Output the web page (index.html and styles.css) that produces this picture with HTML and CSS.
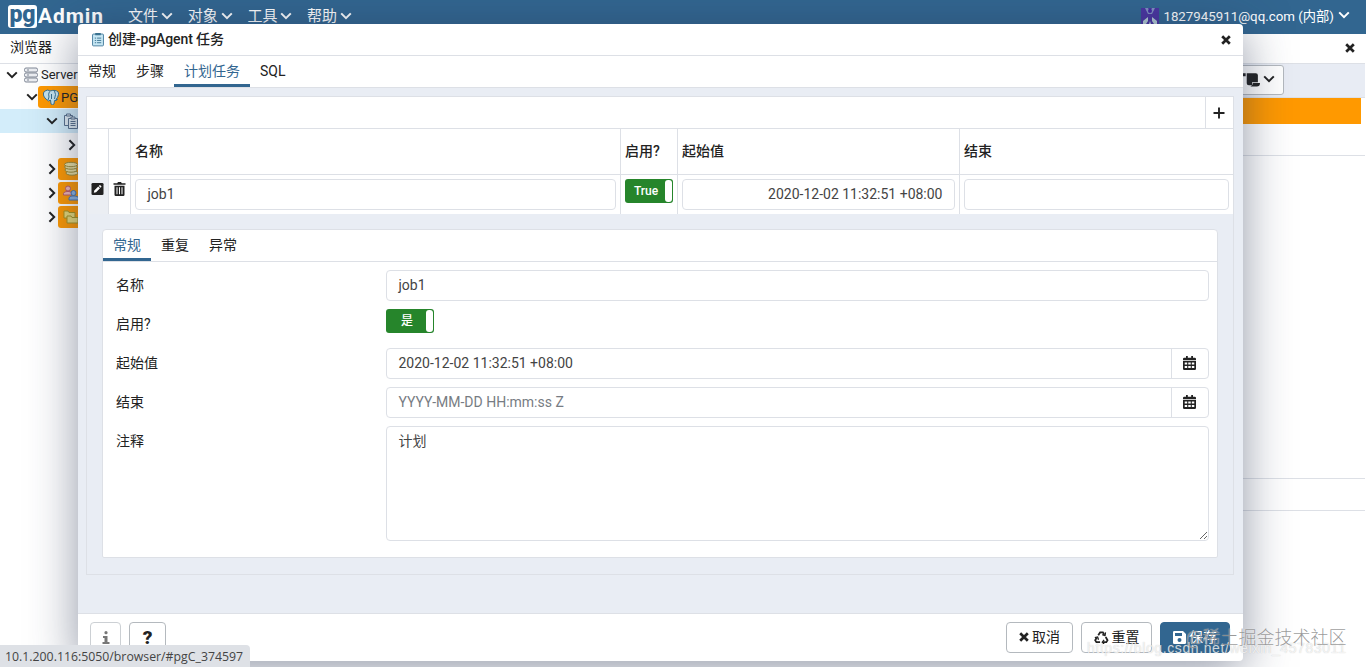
FILE: index.html
```
<!DOCTYPE html>
<html lang="zh-CN">
<head>
    <meta charset="UTF-8">
    <meta name="viewport" content="width=device-width, initial-scale=1.0">
    <title>pgAdmin 4</title>
    <link rel="stylesheet" href="styles.css">
</head>
<body>
    <svg class="symbols">
        <symbol id="down" viewBox="0 0 12 8"><path d="M1.2 1.4 6 6.2l4.800-4.800" fill="none" stroke="currentColor" stroke-width="2"/></symbol>
        <symbol id="right" viewBox="0 0 8 12"><path d="M1.400 1.200 6.200 6l-4.800 4.800" fill="none" stroke="currentColor" stroke-width="2"/></symbol>
        <symbol id="close" viewBox="0 0 10 10"><path d="M1.200 1.200l7.600 7.600M8.800 1.200L1.200 8.800" stroke="currentColor" stroke-width="2.700"/></symbol>
        <symbol id="calendar" viewBox="0 0 13 14">
            <path fill-rule="evenodd" fill="currentColor" d="M3 0h1.800v1.800h3.400V0H10v1.800h1.800Q13 1.800 13 3v1.200H0V3q0-1.200 1.200-1.200H3zM0 5h13v7.800q0 1.200-1.200 1.200H1.200Q0 14 0 12.800zM1.700 6.500v1.900h2.500V6.500zm3.550 0v1.900h2.500V6.500zm3.550 0v1.900h2.500V6.500zM1.700 10v1.900h2.500V10zm3.550 0v1.900h2.500V10zm3.550 0v1.900h2.500V10z"/>
        </symbol>
    </svg>

    <nav class="navbar">
        <div class="logo"><span class="logo-pg">pg</span><span class="logo-admin">Admin</span></div>
        <div class="menu">
            <a>文件 <svg class="down"><use href="#down"/></svg></a>
            <a>对象 <svg class="down"><use href="#down"/></svg></a>
            <a>工具 <svg class="down"><use href="#down"/></svg></a>
            <a>帮助 <svg class="down"><use href="#down"/></svg></a>
        </div>
        <div class="user">
            <svg class="avatar" viewBox="0 0 18 16">
                <rect width="18" height="16" fill="#4a35a0"/>
                <path d="M4 0h3l2 4 2-4h3l-3 6H7z" fill="#7f8fc0"/>
                <path d="M2 16v-3l5-4v4l-2 3zM16 16v-3l-5-4v4l2 3zM8 16l1-3 1 3z" fill="#b4cdd4"/>
                <circle cx="9" cy="3" r="2" fill="#4229a0"/>
            </svg>
            <span>1827945911@qq.com (内部)</span>
            <svg class="down"><use href="#down"/></svg>
        </div>
    </nav>

    <div class="workspace">
        <div class="browser">
            <div class="panel-title">浏览器</div>
            <div class="tree">
                <div class="node level-0">
                    <svg class="down"><use href="#down"/></svg>
                    <span class="item">
                        <svg viewBox="0 0 16 16" class="node-icon"><g fill="#eceef2" stroke="#808896"><rect x="1.500" y="1" width="13" height="4" rx="1.500"/><rect x="1.500" y="6" width="13" height="4" rx="1.500"/><rect x="1.500" y="11" width="13" height="4" rx="1.500"/></g><path d="M4 3h2M4 8h2M4 13h2" stroke="#808896"/></svg>
                        Servers
                    </span>
                </div>
                <div class="node level-1">
                    <svg class="down"><use href="#down"/></svg>
                    <span class="item orange">
                        <svg viewBox="0 0 16 16" class="node-icon"><path d="M2 2q3-2 5 0 3-1 5-.5 4 .5 3.500 4-.5 3-2.500 5h1.500q-1.500 1.500-3 1l-.5 3.500q-1.500 1.500-3 0l-.5-4-2 1Q-.5 8 .5 4 1 2.500 2 2z" fill="#c5e3ee" stroke="#39718f"/><path d="M6.500 2.500Q5 5 6 8l-1 3M11.500 2q2 3 0 8M8.500 5v5" fill="none" stroke="#39718f"/></svg>
                        PG
                    </span>
                </div>
                <div class="node level-2 selected">
                    <svg class="down"><use href="#down"/></svg>
                    <span class="item">
                        <svg viewBox="0 0 16 16" class="node-icon"><g fill="#e2edf3" stroke="#59718c"><path d="M1.500 2.500h8v10h-8z"/><path d="M3.500 1h4v2h-4z"/><path d="M5.500 5.500h9v10h-9z"/><path d="M8 4h4v2H8zM7.500 8.500h5M7.500 10.500h5M7.500 12.500h5"/></g></svg>
                    </span>
                </div>
                <div class="node level-3">
                    <svg class="right"><use href="#right"/></svg>
                </div>
                <div class="node level-2">
                    <svg class="right"><use href="#right"/></svg>
                    <span class="item orange">
                        <svg viewBox="0 0 16 16" class="node-icon"><g fill="#e9dfa0" stroke="#9a8a35"><ellipse cx="9" cy="12" rx="6" ry="2.200"/><ellipse cx="8" cy="9" rx="6" ry="2.200"/><ellipse cx="8" cy="6" rx="6.500" ry="2.200"/><ellipse cx="8" cy="3.500" rx="6.500" ry="2.200"/></g></svg>
                    </span>
                </div>
                <div class="node level-2">
                    <svg class="right"><use href="#right"/></svg>
                    <span class="item orange">
                        <svg viewBox="0 0 16 16" class="node-icon"><g fill="#f0b7b5" stroke="#bd5b68"><circle cx="5" cy="3.500" r="2.500"/><path d="M.5 10V8.500Q1 6.500 4 6.500h2q3 0 3 3v.5z"/></g><g fill="#8db5e4" stroke="#4675b0"><circle cx="10.500" cy="8" r="2.500"/><path d="M6 15v-2q.5-2 3-2h3q3 0 3.500 2v2z"/></g></svg>
                    </span>
                </div>
                <div class="node level-2">
                    <svg class="right"><use href="#right"/></svg>
                    <span class="item orange">
                        <svg viewBox="0 0 16 16" class="node-icon"><g fill="#e8da78" stroke="#a59420"><path d="M1 2h4l1 1.500h6V9H1z"/><path d="M4 7h4l1 1.500h6V14H4z"/></g></svg>
                    </span>
                </div>
            </div>
        </div>
        <div class="content">
            <div class="panel-title right-title"><svg class="close"><use href="#close"/></svg></div>
            <div class="toolbar">
                <div class="tool-btn">
                    <svg class="scroll" viewBox="0 0 16 14"><path d="M0 1h2.500v3H0zM3.500 1H12q2 0 2 2v6.500H8.500v3H5.500q-2 0-2-2z" fill="currentColor"/><path d="M9.200 10.200H16q0 3.300-3 3.300H7q2.200-.5 2.200-3.300z" fill="currentColor"/></svg>
                    <svg class="down"><use href="#down"/></svg>
                </div>
            </div>
            <div class="orange-bar"></div>
            <div class="strip first-strip"></div>
            <div class="editor-area"></div>
            <div class="strip"></div>
        </div>
    </div>

    <div class="dialog">
        <div class="dialog-header">
            <svg class="clipboard" viewBox="0 0 13 15"><rect x=".6" y="1.600" width="11.800" height="12.800" rx="1" fill="#c7e7f4" stroke="#42799b"/><path d="M3.500.5h6v2.500h-6z" fill="#39718f"/><path d="M3 6h1.500M3 8.500h1.500M3 11h1.500M5.500 6H10M5.500 8.500H10M5.500 11H10" stroke="#39718f"/></svg>
            <span class="dialog-title">创建-pgAgent 任务</span>
            <svg class="close"><use href="#close"/></svg>
        </div>
        <div class="tabs main-tabs">
            <a class="tab">常规</a>
            <a class="tab">步骤</a>
            <a class="tab active">计划任务</a>
            <a class="tab">SQL</a>
        </div>
        <div class="dialog-body">
            <div class="grid-box">
                <div class="grid-toolbar">
                    <div class="add-btn"><svg viewBox="0 0 12 12"><path d="M6 .5v11M.5 6h11" stroke="currentColor" stroke-width="1.900"/></svg></div>
                </div>
                <div class="grid-row grid-head">
                    <div></div>
                    <div></div>
                    <div>名称</div>
                    <div>启用?</div>
                    <div>起始值</div>
                    <div>结束</div>
                </div>
                <div class="grid-row grid-data">
                    <div class="icon-cell editing"><svg viewBox="0 0 12 12"><rect width="12" height="12" rx="1.300" fill="currentColor"/><path d="M2.300 9.700l.5-2.300 3.900-3.900 1.800 1.800-3.900 3.900zM7.300 2.900l.7-.7q.4-.4.8 0l1 1q.4.4 0 .8l-.7.7z" fill="#fff"/></svg></div>
                    <div class="icon-cell"><svg class="trash" viewBox="0 0 12 14"><path fill-rule="evenodd" fill="currentColor" d="M0 1.200h3.700L4.500 0h3l.8 1.200H12v1.600H0zM1 3.800h10v9q0 1.200-1.200 1.200H2.200Q1 14 1 12.800zM3 5.300v7h1v-7zm2.500 0v7h1v-7zm2.500 0v7h1v-7z"/></svg></div>
                    <div><div class="input">job1</div></div>
                    <div><div class="toggle"><span>True</span><i></i></div></div>
                    <div><div class="input align-right">2020-12-02 11:32:51 +08:00</div></div>
                    <div><div class="input"></div></div>
                </div>

                <div class="sub-panel">
                    <div class="tabs">
                        <a class="tab active">常规</a>
                        <a class="tab">重复</a>
                        <a class="tab">异常</a>
                    </div>
                    <div class="form">
                        <div class="form-row">
                            <label>名称</label>
                            <div class="input">job1</div>
                        </div>
                        <div class="form-row">
                            <label>启用?</label>
                            <div class="toggle"><span>是</span><i></i></div>
                        </div>
                        <div class="form-row">
                            <label>起始值</label>
                            <div class="input date"><span>2020-12-02 11:32:51 +08:00</span><b><svg><use href="#calendar"/></svg></b></div>
                        </div>
                        <div class="form-row">
                            <label>结束</label>
                            <div class="input date"><span class="placeholder">YYYY-MM-DD HH:mm:ss Z</span><b><svg><use href="#calendar"/></svg></b></div>
                        </div>
                        <div class="form-row">
                            <label>注释</label>
                            <textarea class="input comment">计划</textarea>
                        </div>
                    </div>
                </div>
            </div>
        </div>
        <div class="dialog-footer">
            <div class="btn info"><svg viewBox="0 0 8 13"><circle cx="4" cy="1.700" r="1.600" fill="currentColor"/><path d="M1 5h4.500v6H7.500v2H.5v-2h2V7H1z" fill="currentColor"/></svg></div>
            <div class="btn help">?</div>
            <div class="spacer"></div>
            <div class="btn cancel"><svg class="close"><use href="#close"/></svg>取消</div>
            <div class="btn reset"><svg viewBox="0 0 16 14" fill="none" stroke="currentColor" stroke-width="1.900"><path d="M4.500 4.500l2-3h3l1.500 2.600M12.500 6.500l2 3.500-1.300 2H9.500M6.500 12H2.500l-1.300-2 1.700-3"/><path d="M12.300 1.500l-.5 3.500-3-1M10.800 9.500L8.800 12l2 2M.8 7.200l3-.8 1 3" stroke-width="1.400"/></svg>重置</div>
            <div class="btn save"><svg viewBox="0 0 13 13"><path fill-rule="evenodd" fill="currentColor" d="M1.200 0H10l3 3v8.800q0 1.200-1.200 1.200H1.200Q0 13 0 11.800V1.200Q0 0 1.200 0zM2 2v3h7V2zm4.500 5a2 2 0 100 4 2 2 0 000-4z"/></svg>保存</div>
        </div>
    </div>

    <div class="status-url">10.1.200.116:5050/browser/#pgC_374597</div>
    <div class="watermark blog">https://blog.csdn.net/weixin_45783011</div>
    <div class="watermark community">@稀土掘金技术社区</div>
</body>
</html>
```
FILE: styles.css
```
* {
    box-sizing: border-box;
}
body {
    margin: 0;
    height: 667px;
    display: flex;
    flex-direction: column;
    overflow: hidden;
    background: #fff;
    color: #222;
    font-family: Roboto, "Noto Sans CJK SC", sans-serif;
    font-size: 14px;
    line-height: 21px;
}
svg {
    display: block;
    flex: none;
}
.symbols {
    position: absolute;
    width: 0;
    height: 0;
}
.down {
    width: 12px;
    height: 8px;
}
.right {
    width: 8px;
    height: 12px;
}
.close {
    width: 10px;
    height: 10px;
}

/* top bar */
.navbar {
    display: flex;
    align-items: center;
    flex: none;
    height: 34px;
    padding: 0 16px 2px 8px;
    background: #326690;
    color: #fff;
}
.logo {
    display: flex;
    align-items: center;
    width: 120px;
    font-weight: bold;
    font-size: 21px;
    line-height: 23px;
}
.logo-pg {
    width: 29px;
    height: 23px;
    border-radius: 3px;
    background: #fff;
    color: #326690;
    text-align: center;
    font-size: 23px;
    font-weight: 900;
    line-height: 19px;
}
.logo-admin {
    margin-left: 1px;
    letter-spacing: 0.9px;
}
.menu {
    display: flex;
}
.menu a {
    display: flex;
    align-items: center;
    gap: 3px;
    width: 59.7px;
    font-size: 15px;
}
.menu .down,
.user .down {
    stroke-width: 2.4;
}
.user {
    display: flex;
    align-items: center;
    margin-left: auto;
    font-size: 13.3px;
}
.avatar {
    width: 18px;
    height: 16px;
    margin-right: 4px;
}
.user .down {
    margin: -3px 0 0 4px;
}

/* panels behind the dialog */
.workspace {
    display: flex;
    flex: 1;
}
.browser {
    width: 300px;
}
.panel-title {
    height: 30px;
    padding: 3px 10px;
    border-bottom: 1px solid #dde0e6;
}
.tree {
    font-size: 13px;
}
.node {
    display: flex;
    align-items: center;
    height: 24px;
}
.level-0 {
    padding-left: 6px;
    height: 21px;
}
.level-1 {
    padding-left: 26px;
}
.level-2 {
    padding-left: 46px;
}
.level-2 .right {
    margin: 0 2px;
}
.level-3 {
    padding-left: 68px;
}
.selected {
    background: #d3edfa;
}
.item {
    display: flex;
    align-items: center;
    gap: 2px;
    height: 22px;
    padding-left: 5px;
}
.orange {
    flex: 1;
    padding-left: 5px;
    border-radius: 3px;
    background: #ff9900;
}
.node-icon {
    width: 16px;
    height: 16px;
}
.content {
    display: flex;
    flex-direction: column;
    flex: 1;
    margin-right: 1px;
}
.right-title {
    display: flex;
    align-items: center;
    justify-content: flex-end;
    padding-bottom: 4px;
}
.toolbar {
    display: flex;
    height: 34px;
    padding: 1px 0 2px 930px;
    background: #e8ecf4;
    border-bottom: 1px solid #dde0e6;
}
.tool-btn {
    display: flex;
    align-items: center;
    justify-content: flex-end;
    gap: 3px;
    width: 54px;
    height: 30px;
    padding: 0 8px 2px 0;
    border: 1px solid #b4b9be;
    border-radius: 3px;
    background: #fff;
}
.scroll {
    width: 17px;
    height: 15px;
}
.orange-bar {
    height: 26px;
    margin-right: 4px;
    background: #ff9900;
}
.strip {
    height: 33px;
    border-top: 1px solid #dde0e6;
    border-bottom: 1px solid #dde0e6;
}
.first-strip {
    height: 32px;
    border-top: none;
}
.editor-area {
    height: 322px;
}

/* dialog */
.dialog {
    position: absolute;
    left: 78px;
    top: 24px;
    width: 1165px;
    height: 637px;
    display: flex;
    flex-direction: column;
    border-radius: 4px;
    background: #fff;
    box-shadow: 0 8px 48px rgba(35, 48, 78, 0.5);
    overflow: hidden;
}
.dialog-header {
    display: flex;
    align-items: center;
    height: 32px;
    padding: 0 12px 0 14px;
    border-bottom: 1px solid #dde0e6;
}
.clipboard {
    width: 12px;
    height: 15px;
    margin-right: 4px;
}
.dialog-title {
    flex: 1;
    font-weight: 500;
    letter-spacing: -0.1px;
}
.tabs {
    display: flex;
    height: 32px;
    border-bottom: 1px solid #dde0e6;
}
.tab {
    height: 31px;
    padding: 5px 10px 0;
    border-bottom: 3px solid transparent;
}
.tab.active {
    border-color: #326690;
    color: #326690;
}
.dialog-body {
    flex: 1;
    padding: 8px 9px 0 8px;
    background: #e9edf4;
}
.grid-box {
    height: 479px;
    border: 1px solid #dde0e6;
}
.grid-toolbar {
    display: flex;
    justify-content: flex-end;
    height: 32px;
    background: #fff;
    border-bottom: 1px solid #dde0e6;
}
.add-btn {
    display: flex;
    align-items: center;
    justify-content: center;
    width: 28px;
    padding-right: 1px;
    border-left: 1px solid #dde0e6;
}
.add-btn svg {
    width: 12px;
    height: 12px;
}
.grid-row {
    display: grid;
    grid-template-columns: 22px 22px 490px 57px 282px 1fr;
    background: #fff;
}
.grid-row > div {
    padding: 4px;
    border-right: 1px solid #dde0e6;
}
.grid-row > div:last-child {
    border-right: none;
}
.grid-head {
    height: 46px;
    border-bottom: 1px solid #dde0e6;
    font-weight: 500;
}
.grid-head > div {
    padding-top: 12px;
}
.grid-data {
    height: 39px;
}
.grid-row > .icon-cell {
    padding: 8px 0 0 4px;
}
.icon-cell svg {
    width: 13px;
    height: 12px;
}
.icon-cell .trash {
    width: 13px;
    height: 14px;
    margin-top: -1px;
}
.grid-row > .editing {
    background: #ebeef3;
}
.input {
    width: 100%;
    height: 31px;
    padding: 4px 11.5px;
    border: 1px solid #dde0e6;
    border-radius: 4px;
    background: #fff;
    color: #444;
}
.align-right {
    text-align: right;
}
.toggle {
    display: flex;
    width: 48px;
    height: 24px;
    padding: 1px;
    border-radius: 3px;
    background: #26852b;
    color: #fff;
    font-size: 12px;
    font-weight: 500;
    line-height: 22px;
}
.toggle span {
    flex: 1;
    padding-left: 1px;
    text-align: center;
}
.toggle i {
    width: 7px;
    border-radius: 3px;
    background: #fff;
}
.sub-panel {
    height: 329px;
    margin: 15px 15px 0;
    border: 1px solid #dde0e6;
    border-radius: 4px 4px 2px 2px;
    background: #fff;
}
.form {
    display: flex;
    flex-direction: column;
    gap: 8px;
    padding: 8px 8px 0 13px;
}
.form-row {
    display: flex;
    min-height: 31px;
}
.form-row label {
    flex: none;
    width: 270px;
    padding-top: 5px;
}
.comment {
    display: block;
    height: 115px;
    margin: 0;
    font: inherit;
    resize: vertical;
}
.form .date {
    display: flex;
    padding: 0;
}
.date span {
    flex: 1;
    padding: 4px 11.5px;
}
.date b {
    display: flex;
    align-items: center;
    justify-content: center;
    width: 37px;
    padding: 0 1px 1px 0;
    border-left: 1px solid #dde0e6;
    color: #222;
}
.date svg {
    width: 13px;
    height: 14px;
}
.date .placeholder {
    color: #777c83;
}
.dialog-footer {
    display: flex;
    gap: 8px;
    height: 48px;
    padding: 8px 13px 0 12px;
    border-top: 1px solid #dde0e6;
}
.spacer {
    flex: 1;
}
.btn {
    display: flex;
    align-items: center;
    justify-content: center;
    gap: 3px;
    height: 31px;
    padding-bottom: 1px;
    border: 1px solid #b4b9be;
    border-radius: 4px;
}
.info {
    width: 31px;
    border-color: #ccd0d4;
    color: #777;
}
.info svg {
    width: 8px;
    height: 13px;
}
.help {
    width: 37px;
    font-size: 19px;
    font-weight: 900;
}
.cancel {
    width: 67px;
}
.reset {
    width: 71px;
}
.reset svg {
    width: 15px;
    height: 13px;
}
.save {
    width: 70px;
    border-color: #326690;
    background: #326690;
    color: #fff;
}
.save svg {
    width: 13px;
    height: 13px;
}

/* overlays */
.status-url {
    position: absolute;
    left: 0;
    bottom: 0;
    width: 250px;
    height: 22px;
    padding: 1px 5px;
    border-top-right-radius: 4px;
    background: #dee1e6;
    color: #444;
    font: 12.3px/21px "Open Sans", sans-serif;
    white-space: nowrap;
}
.watermark {
    position: absolute;
    white-space: nowrap;
}
.blog {
    left: 1087px;
    top: 638px;
    color: rgba(255, 255, 255, 0.75);
    font-family: "Liberation Sans", sans-serif;
    font-size: 14px;
    letter-spacing: 0.6px;
    text-shadow: 0 0 1px rgba(90, 90, 90, 0.35);
}
.community {
    left: 1186px;
    top: 627px;
    color: rgba(120, 120, 120, 0.75);
    font-size: 18px;
    font-weight: 300;
    text-shadow: 0 0 1px rgba(255, 255, 255, 0.8);
}
```
